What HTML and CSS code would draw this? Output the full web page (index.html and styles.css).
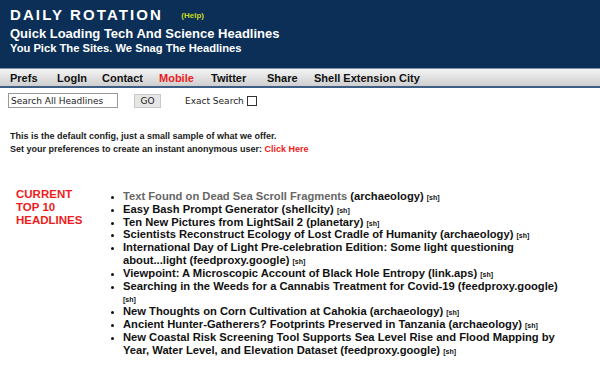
FILE: index.html
```html
<!DOCTYPE html>
<html lang="en">
<head>
    <meta charset="UTF-8">
    <title>Daily Rotation</title>
    <link rel="stylesheet" href="styles.css">
</head>
<body>
    <div class="header">
        <div class="title">DAILY ROTATION <a class="help" href="#">(Help)</a></div>
        <div class="subtitle">Quick Loading Tech And Science Headlines</div>
        <div class="tagline">You Pick The Sites. We Snag The Headlines</div>
    </div>

    <div class="nav">
        <a href="#">Prefs</a>
        <a href="#">LogIn</a>
        <a href="#">Contact</a>
        <a href="#" class="hot">Mobile</a>
        <a href="#">Twitter</a>
        <a href="#">Share</a>
        <a href="#">Shell Extension City</a>
    </div>

    <form class="search">
        <input type="text" class="search-box" value="Search All Headlines">
        <button type="button" class="go">GO</button>
        <label class="exact">Exact Search <span class="check"></span></label>
    </form>

    <div class="intro">
        This is the default config, just a small sample of what we offer.<br>
        Set your preferences to create an instant anonymous user: <a href="#" class="red">Click Here</a>
    </div>

    <div class="top10">
        <div class="label">CURRENT<br>TOP 10<br>HEADLINES</div>
        <ul class="headlines">
            <li><a href="#" class="visited">Text Found on Dead Sea Scroll Fragments</a> (archaeology) <span class="sh">[sh]</span></li>
            <li><a href="#">Easy Bash Prompt Generator</a> (shellcity) <span class="sh">[sh]</span></li>
            <li><a href="#">Ten New Pictures from LightSail 2</a> (planetary) <span class="sh">[sh]</span></li>
            <li><a href="#">Scientists Reconstruct Ecology of Lost Cradle of Humanity</a> (archaeology) <span class="sh">[sh]</span></li>
            <li><a href="#">International Day of Light Pre-celebration Edition: Some light questioning about...light</a> (feedproxy.google) <span class="sh">[sh]</span></li>
            <li><a href="#">Viewpoint: A Microscopic Account of Black Hole Entropy</a> (link.aps) <span class="sh">[sh]</span></li>
            <li><a href="#">Searching in the Weeds for a Cannabis Treatment for Covid-19</a> (feedproxy.google) <span class="sh">[sh]</span></li>
            <li><a href="#">New Thoughts on Corn Cultivation at Cahokia</a> (archaeology) <span class="sh">[sh]</span></li>
            <li><a href="#">Ancient Hunter-Gatherers? Footprints Preserved in Tanzania</a> (archaeology) <span class="sh">[sh]</span></li>
            <li><a href="#">New Coastal Risk Screening Tool Supports Sea Level Rise and Flood Mapping by Year, Water Level, and Elevation Dataset</a> (feedproxy.google) <span class="sh">[sh]</span></li>
        </ul>
    </div>
</body>
</html>
```

FILE: styles.css
```css
* {
    box-sizing: border-box;
}

body {
    margin: 0;
    font-family: 'Liberation Sans', Arial, sans-serif;
    background: #fff;
    color: #111;
}

a {
    color: inherit;
    text-decoration: none;
}

.header {
    background-color: #0b2f57;
    color: #fff;
    font-weight: bold;
    padding: 6px 10px 0;
    height: 69px;
    border-bottom: 1px solid #7a8ea8;
}

.title {
    font-size: 15px;
    letter-spacing: 2.1px;
    line-height: 17px;
}

.help {
    color: #c8dc1e;
    font-size: 8px;
    letter-spacing: 0;
    margin-left: 12px;
    vertical-align: 2px;
}

.subtitle {
    font-size: 13px;
    line-height: 15px;
    margin-top: 2px;
}

.tagline {
    font-size: 11.2px;
    line-height: 14px;
}

.nav {
    display: flex;
    height: 19px;
    padding: 3px 0 0 10px;
    background: linear-gradient(#f4f4f4, #cfcfcf);
    border-bottom: 2px solid #3d5f86;
    font-weight: bold;
    font-size: 11px;
    line-height: 13px;
}

.nav a {
    color: #111;
}

.nav a:nth-child(1) { width: 47px; }
.nav a:nth-child(2) { width: 45px; }
.nav a:nth-child(3) { width: 57px; }
.nav a:nth-child(4) { width: 52px; }
.nav a:nth-child(5) { width: 56px; }
.nav a:nth-child(6) { width: 47px; }

.nav a.hot {
    color: #ee1c1c;
}

.search {
    display: flex;
    align-items: center;
    margin: 5px 0 0 8px;
    font-family: 'DejaVu Sans', sans-serif;
    font-size: 9px;
}

.search-box {
    width: 110px;
    height: 15px;
    padding: 0 2px;
    border: 1px solid #999;
    font-family: 'DejaVu Sans', sans-serif;
    font-size: 9px;
    color: #222;
}

.go {
    margin-left: 16px;
    width: 27px;
    height: 14px;
    padding: 0;
    border: 1px solid #c8c8c8;
    background: #e6e6e6;
    font-family: 'DejaVu Sans', sans-serif;
    font-size: 9px;
    color: #222;
}

.exact {
    margin-left: 24px;
    display: flex;
    align-items: center;
    color: #222;
}

.check {
    display: inline-block;
    width: 10px;
    height: 10px;
    margin-left: 3px;
    border: 1px solid #333;
    background: #fff;
}

.intro {
    margin: 22px 0 0 10px;
    font-size: 9px;
    font-weight: bold;
    line-height: 13px;
    color: #1a1a1a;
}

.red {
    color: #ee1c1c;
}

.top10 {
    display: flex;
    margin-top: 32px;
}

.label {
    width: 106px;
    padding: 0 0 0 16px;
    color: #ee1c1c;
    font-weight: bold;
    font-size: 11.5px;
    line-height: 13px;
}

.headlines {
    flex: 1;
    margin: 0;
    padding: 2px 30px 0 17px;
    font-weight: bold;
    font-size: 11.2px;
    line-height: 12.8px;
    color: #111;
}

.headlines li {
    list-style: disc;
}

.headlines li::marker {
    font-size: 9px;
}

.visited {
    color: #666;
}

.sh {
    font-size: 7px;
    line-height: 7px;
}
```
